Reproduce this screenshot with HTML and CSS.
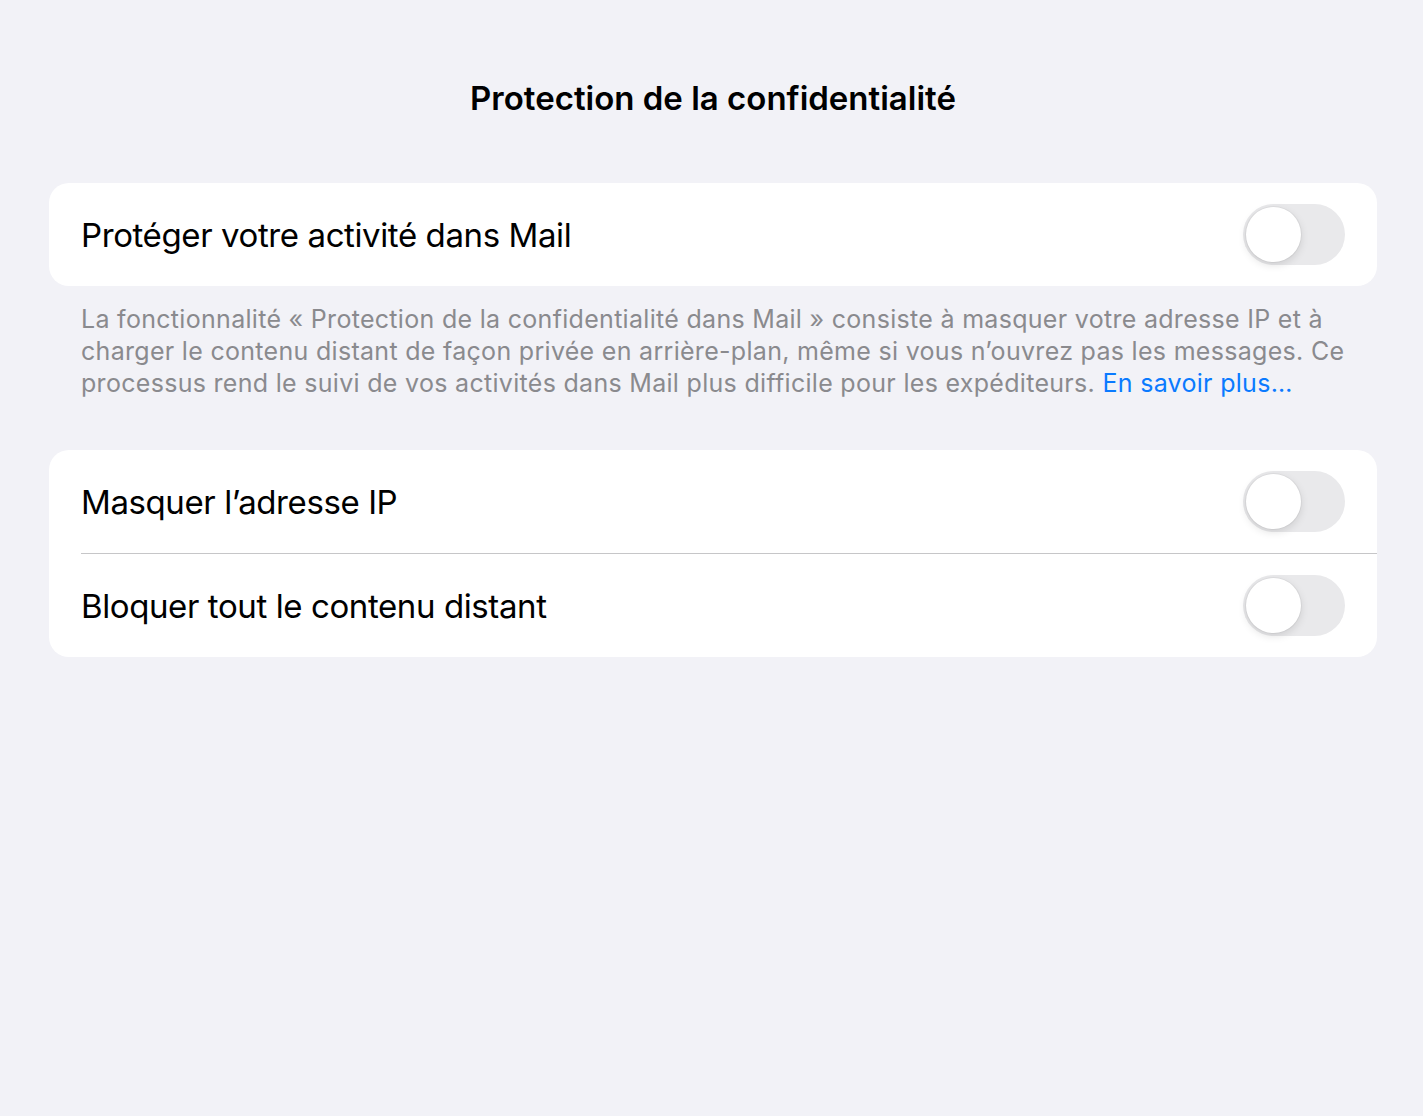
FILE: index.html
```html
<!DOCTYPE html>
<html lang="fr">
<head>
<meta charset="utf-8">
<title>Protection de la confidentialité</title>
<link rel="stylesheet" href="styles.css">
</head>
<body>
<div class="page">
  <h1 class="title">Protection de la confidentialité</h1>

  <div class="group">
    <div class="row">
      <span class="label">Protéger votre activité dans Mail</span>
      <span class="toggle"><span class="knob"></span></span>
    </div>
  </div>
  <p class="footer">La fonctionnalité « Protection de la confidentialité dans Mail » consiste à masquer votre adresse IP et à charger le contenu distant de façon privée en arrière-plan, même si vous n’ouvrez pas les messages. Ce processus rend le suivi de vos activités dans Mail plus difficile pour les expéditeurs. <a class="link" href="#">En savoir plus…</a></p>

  <div class="group">
    <div class="row">
      <span class="label">Masquer l’adresse IP</span>
      <span class="toggle"><span class="knob"></span></span>
    </div>
    <div class="sep"></div>
    <div class="row">
      <span class="label">Bloquer tout le contenu distant</span>
      <span class="toggle"><span class="knob"></span></span>
    </div>
  </div>
</div>
</body>
</html>
```

FILE: styles.css
```css
* { box-sizing: border-box; }
html, body {
  margin: 0;
  padding: 0;
  background: #f2f2f7;
  font-family: Inter, "Noto Sans", "Liberation Sans", sans-serif;
  color: #000;
}
.page {
  width: 1423px;
  min-height: 1116px;
  padding: 0 46px 0 49px;
}
.title {
  margin: 0;
  height: 183px;
  padding-top: 77px;
  font-size: 33px;
  font-weight: 600;
  line-height: 42px;
  text-align: center;
  letter-spacing: 0;
}
.group {
  background: #fff;
  border-radius: 20px;
  overflow: hidden;
}
.row {
  height: 103px;
  display: flex;
  align-items: center;
  justify-content: space-between;
  padding: 0 32px 0 32px;
}
.label {
  font-size: 33px;
  letter-spacing: -0.4px;
  line-height: 40px;
}
.sep {
  height: 1px;
  background: #c6c6c8;
  margin-left: 32px;
}
.toggle {
  position: relative;
  width: 102px;
  height: 61px;
  border-radius: 31px;
  background: #e9e9eb;
  flex: none;
}
.knob {
  position: absolute;
  left: 3px;
  top: 3px;
  width: 55px;
  height: 55px;
  border-radius: 50%;
  background: #fff;
  box-shadow: 0 3px 8px rgba(0,0,0,0.12), 0 0 0 1px rgba(0,0,0,0.04);
}
.footer {
  margin: 0;
  padding: 17px 18px 51px 32px;
  font-size: 25px;
  line-height: 32px;
  color: #8a8a8e;
  letter-spacing: 0.3px;
}
.link {
  color: #0a7aff;
  text-decoration: none;
}
```
